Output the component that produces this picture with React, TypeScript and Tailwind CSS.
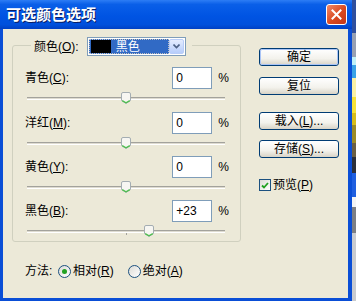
import React from 'react';

const font = { fontFamily: '"Liberation Sans", "Noto Sans CJK SC", sans-serif' };

const rows = [
  { name: '青色', key: 'C', value: 0, mt: 'mt-[11px]' },
  { name: '洋红', key: 'M', value: 0, mt: 'mt-[7px]' },
  { name: '黄色', key: 'Y', value: 0, mt: 'mt-[6px]' },
  { name: '黑色', key: 'B', value: 23, mt: 'mt-[6px]' },
];

const strip = [
  { h: 33, c: '#2f4f9e' },
  { h: 24, c: '#98a0b2' },
  { h: 8, c: '#bff0f8' },
  { h: 13, c: '#3aa2e6' },
  { h: 19, c: '#fbf1a6' },
  { h: 16, c: '#f6e23a' },
  { h: 12, c: '#d7bd1c' },
  { h: 18, c: '#9c8b28' },
  { h: 14, c: '#6b5f44' },
  { h: 16, c: '#2c2f3a' },
  { h: 24, c: '#1f5fe0' },
  { h: 10, c: '#f4f4f4' },
  { h: 26, c: '#7d7f84' },
  { h: 68, c: '#c9cbcf' },
];

function Thumb() {
  return (
    <svg width="10" height="12" viewBox="0 0 10 12">
      <path d="M0.5 2 Q0.5 0.5 2 0.5 H8 Q9.5 0.5 9.5 2 V8.5 L5 11.5 L0.5 8.5 Z" fill="#f7f6f2" stroke="#a4adb2" />
      <path d="M1.2 8.6 L5 10.8 L8.8 8.6" fill="none" stroke="#4fbf4f" strokeWidth="1.4" />
    </svg>
  );
}

function Slider({ value }: { value: number }) {
  return (
    <div className="relative mt-[3px] ml-[14px] h-[13px] w-[198px] pt-[5px]">
      <div className="h-[3px] border-t border-b border-t-[#a3a29c] border-b-white bg-[#dedbd0]" />
      {value !== 0 && <div className="absolute left-[99px] top-[8px] h-[2px] w-px bg-[#a3a29c]" />}
      <div className="absolute top-0" style={{ left: 94 + value }}>
        <Thumb />
      </div>
    </div>
  );
}

function XpButton({ children, def }: { children: React.ReactNode; def?: boolean }) {
  return (
    <div className="flex h-[18px] w-[80px] items-center justify-center rounded-[3px] border border-[#003c74] bg-[linear-gradient(to_bottom,#ffffff,#f3f2ec_60%,#d8d3c6)] text-[12px] leading-none text-black">
      <div className={def ? 'flex h-full w-full items-center justify-center rounded-[2px] border border-[#a9c4f6]' : 'flex h-full w-full items-center justify-center'}>
        {children}
      </div>
    </div>
  );
}

function Radio({ on }: { on?: boolean }) {
  return (
    <div className="flex h-[13px] w-[13px] items-center justify-center rounded-full border border-[#1c5180] bg-[linear-gradient(135deg,#dcdbd5,#ffffff)]">
      {on && <div className="h-[5px] w-[5px] rounded-full bg-[#21a121]" />}
    </div>
  );
}

export default function App() {
  return (
    <div className="flex h-[301px] w-[356px] overflow-hidden bg-[#ece9d8]" style={font}>
      <div className="flex w-[352px] flex-col">
        <div className="flex h-[29px] items-center justify-between bg-[linear-gradient(to_bottom,#2d7df5_0%,#0a5fe8_15%,#0054e3_55%,#0050dc_85%,#0040c4_100%)] pl-[6px] pr-[5px]">
          <span className="text-[15px] font-bold text-white [text-shadow:1px_1px_0_#0a1e64]" style={{ fontFamily: '"Noto Sans CJK SC", sans-serif' }}>
            可选颜色选项
          </span>
          <div className="flex h-[21px] w-[21px] items-center justify-center rounded-[3px] border border-white bg-[linear-gradient(135deg,#f08a6a,#d9481f_55%,#c2361a)]">
            <svg width="11" height="11" viewBox="0 0 11 11">
              <path d="M1.5 1.5 L9.5 9.5 M9.5 1.5 L1.5 9.5" stroke="white" strokeWidth="2" strokeLinecap="square" />
            </svg>
          </div>
        </div>
        <div className="flex flex-1 border-x-[3px] border-b-[3px] border-r-[4px] border-[#0a4ed6] pt-[16px]">
          <div className="ml-[9px] w-[229px]">
            <div className="rounded-[3px] border border-[#d0d0bf] pb-[3px]">
              <div className="-mt-[9px] ml-[18px] flex h-[19px] w-fit items-center bg-[#ece9d8] px-[3px] pr-[6px]">
                <span className="text-[12px] text-black">
                  颜色(<u>O</u>):
                </span>
                <div className="ml-[8px] flex h-[19px] w-[99px] border border-[#7f9db9] bg-white p-px">
                  <div className="flex flex-1 items-center bg-[#316ac5] outline-1 -outline-offset-1 outline-dotted outline-[#c0c0c0]">
                    <div className="ml-[2px] h-[13px] w-[20px] bg-black" />
                    <span className="ml-[5px] text-[12px] leading-none text-white">黑色</span>
                  </div>
                  <div className="flex w-[15px] items-center justify-center rounded-[2px] border border-[#b9cdf8] bg-[linear-gradient(to_bottom,#e4ecfe,#b7cdfb)]">
                    <svg width="7" height="5" viewBox="0 0 7 5">
                      <path d="M0.5 0.5 L3.5 3.5 L6.5 0.5" fill="none" stroke="#4d6185" strokeWidth="1.6" />
                    </svg>
                  </div>
                </div>
              </div>
              {rows.map((r) => (
                <div key={r.key} className={r.mt}>
                  <div className="flex h-[22px] items-center pl-[12px] pr-[11px] text-[12px] text-black">
                    <span className="flex-1">
                      {r.name}(<u>{r.key}</u>):
                    </span>
                    <div className="flex h-[22px] w-[40px] items-center border border-[#7f9db9] bg-white pl-[3px]">
                      {r.value > 0 ? `+${r.value}` : r.value}
                    </div>
                    <span className="ml-[6px]">%</span>
                  </div>
                  <Slider value={r.value} />
                </div>
              ))}
            </div>
            <div className="mt-[21px] flex h-[16px] items-center pl-[13px] text-[12px] text-black">
              <span className="w-[33px]">方法:</span>
              <Radio on />
              <span className="ml-[2px]">
                相对(<u>R</u>)
              </span>
              <div className="ml-[14px]">
                <Radio />
              </div>
              <span className="ml-[2px]">
                绝对(<u>A</u>)
              </span>
            </div>
          </div>
          <div className="ml-[18px] flex w-[80px] flex-col">
            <div className="mt-[3px]">
              <XpButton def>确定</XpButton>
            </div>
            <div className="mt-[11px]">
              <XpButton>复位</XpButton>
            </div>
            <div className="mt-[17px]">
              <XpButton>
                载入(<u>L</u>)...
              </XpButton>
            </div>
            <div className="mt-[10px]">
              <XpButton>
                存储(<u>S</u>)...
              </XpButton>
            </div>
            <div className="mt-[18px] flex items-center text-[12px] text-black">
              <div className="flex h-[12px] w-[12px] items-center justify-center border border-[#1c5180] bg-[linear-gradient(135deg,#dcdbd5,#ffffff)]">
                <svg width="8" height="7" viewBox="0 0 8 7">
                  <path d="M1 3.5 L3 5.5 L7 1" fill="none" stroke="#21a121" strokeWidth="1.8" />
                </svg>
              </div>
              <span className="ml-[2px]">
                预览(<u>P</u>)
              </span>
            </div>
          </div>
        </div>
      </div>
      <div className="flex w-[4px] flex-col">
        {strip.map((s, i) => (
          <div key={i} style={{ height: s.h, background: s.c }} />
        ))}
      </div>
    </div>
  );
}
